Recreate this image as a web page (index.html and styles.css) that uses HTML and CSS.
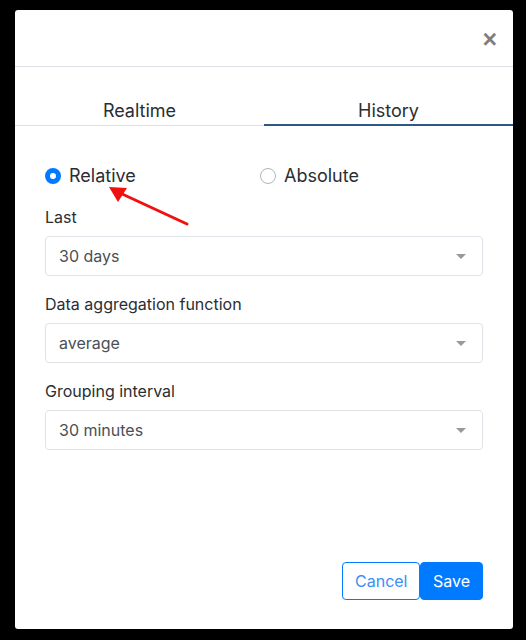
FILE: index.html
```html
<!DOCTYPE html>
<html>
<head>
<meta charset="utf-8">
<link rel="stylesheet" href="styles.css">
</head>
<body>
<div class="stage">
  <div class="modal">
    <div class="modal-header">
      <button class="close" type="button">×</button>
    </div>
    <div class="tabs">
      <div class="tab">Realtime</div>
      <div class="tab active">History</div>
    </div>
    <div class="modal-body">
      <div class="radios">
        <label class="radio checked"><span class="dot"></span>Relative</label>
        <label class="radio"><span class="dot"></span>Absolute</label>
      </div>
      <div class="field">
        <div class="label">Last</div>
        <div class="select"><span>30 days</span><span class="caret"></span></div>
      </div>
      <div class="field">
        <div class="label">Data aggregation function</div>
        <div class="select"><span>average</span><span class="caret"></span></div>
      </div>
      <div class="field">
        <div class="label">Grouping interval</div>
        <div class="select"><span>30 minutes</span><span class="caret"></span></div>
      </div>
    </div>
    <div class="modal-footer">
      <button class="btn btn-outline" type="button">Cancel</button>
      <button class="btn btn-primary" type="button">Save</button>
    </div>
  </div>
  <svg class="annotation" width="526" height="640" viewBox="0 0 526 640">
    <line x1="187" y1="224" x2="120" y2="193" stroke="#f01010" stroke-width="3" stroke-linecap="round"/>
    <polygon points="109,187 118,202 127,188" fill="#f01010"/>
  </svg>
</div>
</body>
</html>
```

FILE: styles.css
```css
* { box-sizing: border-box; }
html, body { margin: 0; padding: 0; }
body {
  background: #000;
  font-family: Inter, "Noto Sans", "Liberation Sans", sans-serif;
  color: #212529;
}
.stage {
  position: relative;
  width: 526px;
  height: 640px;
  padding: 10px 0 0 15px;
}
.modal {
  width: 498px;
  height: 619px;
  background: #fff;
  border-radius: 3px;
  display: flex;
  flex-direction: column;
}
.modal-header {
  height: 57px;
  border-bottom: 1px solid #dee2e6;
  display: flex;
  justify-content: flex-end;
  align-items: flex-start;
  padding: 15px 16px 0 0;
}
.close {
  border: 0;
  background: transparent;
  padding: 0;
  font-family: "Liberation Sans", Arial, sans-serif;
  font-size: 25px;
  font-weight: bold;
  line-height: 28px;
  color: #000;
  opacity: 0.5;
}
.tabs {
  margin-top: 20px;
  display: flex;
  border-bottom: 1px solid #dee2e6;
}
.tab {
  flex: 1;
  text-align: center;
  font-size: 18px;
  line-height: 24px;
  padding: 12px 0 1px;
  border-bottom: 2px solid transparent;
  margin-bottom: -1px;
  color: #2a2e33;
}
.tab.active { border-bottom-color: #2f5886; }
.modal-body {
  flex: 1;
  padding: 38px 30px 0;
}
.radios {
  display: flex;
  height: 24px;
}
.radio {
  display: flex;
  align-items: center;
  gap: 8px;
  font-size: 18px;
  line-height: 24px;
  color: #2a2e33;
  width: 215px;
}
.dot {
  width: 16px;
  height: 16px;
  border-radius: 50%;
  border: 1px solid #adb5bd;
  background: #fff;
  flex: none;
}
.radio.checked .dot {
  border: 5px solid #007bff;
  background: #fff;
}
.field { margin-top: 16px; }
.radios + .field { margin-top: 17px; }
.label {
  font-size: 16px;
  line-height: 24px;
  margin-bottom: 7px;
  color: #2a2e33;
}
.select {
  height: 40px;
  border: 1px solid #dfe2e6;
  border-radius: 4px;
  display: flex;
  align-items: center;
  justify-content: space-between;
  padding: 0 16px 0 13px;
  font-size: 16px;
  color: #495057;
}
.caret {
  width: 0;
  height: 0;
  border-left: 5px solid transparent;
  border-right: 5px solid transparent;
  border-top: 5px solid #999;
}
.modal-footer {
  display: flex;
  justify-content: flex-end;
  padding: 0 30px 29px;
}
.btn {
  height: 38px;
  font-family: inherit;
  font-size: 16px;
  line-height: 24px;
  padding: 6px 12px;
  border-radius: 4px;
  border: 1px solid #007bff;
}
.btn-outline {
  background: #fff;
  color: #3b8ef5;
  width: 78px;
}
.btn-primary {
  background: #007bff;
  color: #fff;
  width: 63px;
}
.annotation {
  position: absolute;
  left: 0;
  top: 0;
  pointer-events: none;
}
```
